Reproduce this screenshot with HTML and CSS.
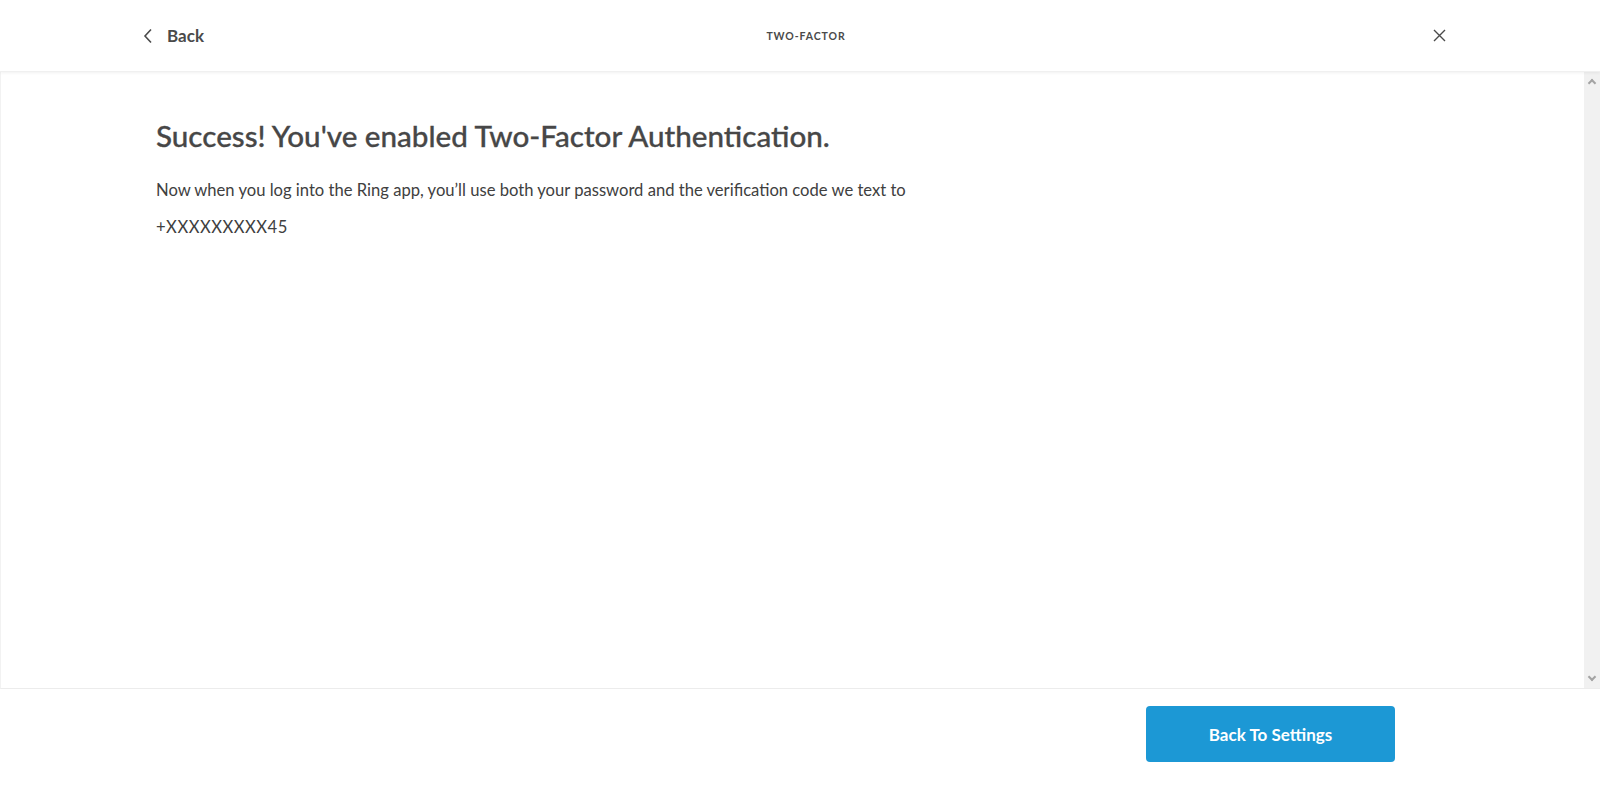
FILE: index.html
```html
<!DOCTYPE html>
<html lang="en">
<head>
    <meta charset="UTF-8">
    <meta name="viewport" content="width=device-width, initial-scale=1.0">
    <title>Two-Factor</title>
    <link rel="stylesheet" href="styles.css">
</head>
<body>
    <div class="page">
        <header class="topbar">
            <a class="back" href="#">
                <svg width="10" height="16" viewBox="0 0 10 16"><path d="M8 1.5 L2 8 L8 14.5" fill="none" stroke="#4a4a4a" stroke-width="1.6"/></svg>
                <span>Back</span>
            </a>
            <div class="topbar-title">TWO-FACTOR</div>
            <button type="button" class="close" aria-label="Close">
                <svg width="13" height="13" viewBox="0 0 13 13"><path d="M1 1 L12 12 M12 1 L1 12" fill="none" stroke="#4a4a4a" stroke-width="1.4"/></svg>
            </button>
        </header>

        <div class="body">
            <main class="content">
                <h1>Success! You've enabled Two-Factor Authentication.</h1>
                <p>Now when you log into the Ring app, you’ll use both your password and the verification code we text to</p>
                <p class="phone">+XXXXXXXXX45</p>
            </main>
            <div class="scrollbar">
                <span class="arrow up"></span>
                <span class="arrow down"></span>
            </div>
        </div>

        <footer class="footer">
            <button type="button" class="primary">Back To Settings</button>
        </footer>
    </div>
</body>
</html>
```

FILE: styles.css
```css
* {
    box-sizing: border-box;
}

html,
body {
    margin: 0;
    height: 100%;
}

body {
    font-family: Lato, "Open Sans", sans-serif;
    color: #4a4a4a;
    background: #fff;
}

.page {
    display: flex;
    flex-direction: column;
    height: 786px;
}

/* header */
.topbar {
    height: 72px;
    flex: none;
    display: grid;
    grid-template-columns: 1fr auto 1fr;
    align-items: center;
    padding: 0 154px 0 140px;
    position: relative;
    z-index: 1;
    box-shadow: 0 1px 3px rgba(0, 0, 0, 0.06);
    border-bottom: 1px solid #f0f0f0;
}

.back {
    display: flex;
    align-items: center;
    gap: 14px;
    color: #4a4a4a;
    text-decoration: none;
    font-size: 17px;
    font-weight: 700;
    padding-left: 3px;
}

.topbar-title {
    font-size: 10.5px;
    font-weight: 700;
    letter-spacing: 0.9px;
    color: #4a4a4a;
    margin-left: 26px;
}

.close {
    justify-self: end;
    background: none;
    border: 0;
    padding: 0;
    display: flex;
}

/* scroll area */
.body {
    flex: 1;
    display: flex;
    border-left: 1px solid #f2f2f2;
    border-bottom: 1px solid #ececec;
}

.content {
    flex: 1;
    padding: 46px 155px 0;
}

.content h1 {
    margin: 0 0 26px;
    font-size: 29.6px;
    font-weight: 500;
    line-height: 36px;
    color: #474747;
    -webkit-text-stroke: 0.3px #474747;
}

.content p {
    margin: 0 0 16px;
    font-size: 16.6px;
    line-height: 21px;
    color: #404040;
}

.content .phone {
    letter-spacing: 0.5px;
}

.scrollbar {
    width: 16px;
    flex: none;
    background: #f1f1f1;
    display: flex;
    flex-direction: column;
    justify-content: space-between;
    align-items: center;
    padding: 6px 0;
}

.arrow {
    width: 6px;
    height: 6px;
    border-left: 2px solid #a3a3a3;
    border-top: 2px solid #a3a3a3;
}

.arrow.up {
    transform: rotate(45deg);
    margin-top: 2px;
}

.arrow.down {
    transform: rotate(225deg);
    margin-bottom: 2px;
}

/* footer */
.footer {
    height: 97px;
    flex: none;
    display: flex;
    justify-content: flex-end;
    align-items: flex-start;
    padding: 17px 205px 0 0;
}

.primary {
    width: 249px;
    height: 56px;
    border: 0;
    border-radius: 4px;
    background: #1c98d5;
    color: #fff;
    font-family: Lato, "Open Sans", sans-serif;
    font-size: 17px;
    font-weight: 700;
}
```
